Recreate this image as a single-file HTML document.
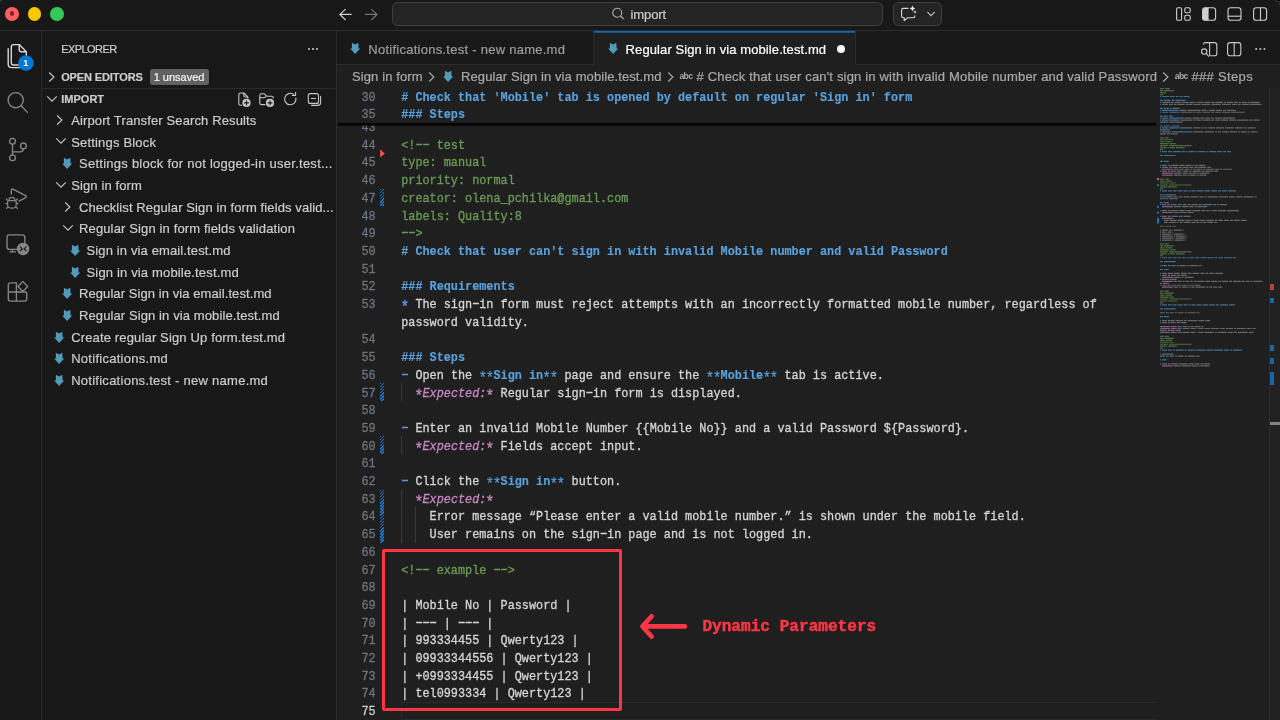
<!DOCTYPE html>
<html>
<head>
<meta charset="utf-8">
<style>
*{box-sizing:border-box;margin:0;padding:0}
html,body{width:1280px;height:720px;overflow:hidden;background:#181818}
body{font-family:"Liberation Sans",sans-serif;color:#cccccc;position:relative}
.abs{position:absolute}
#titlebar{left:0;top:0;width:1280px;height:30px;background:#181818}
#titleborder{left:0;top:30px;width:1280px;height:1px;background:#2b2b2b}
.tl{position:absolute;top:7px;width:13px;height:13px;border-radius:50%}
#search{left:392px;top:2px;width:491px;height:24px;border:1px solid #404040;border-radius:5.5px;background:#242424}
#copilot{left:893px;top:2px;width:49px;height:24px;border:1px solid #404040;border-radius:5.5px;background:#242424}
#activity{left:0;top:31px;width:41px;height:689px;background:#181818}
#actborder{left:41px;top:31px;width:1px;height:689px;background:#2b2b2b}
#sidebar{left:42px;top:31px;width:294px;height:689px;background:#181818}
#sideborder{left:336px;top:31px;width:1px;height:689px;background:#2b2b2b}
#editor{left:337px;top:31px;width:943px;height:689px;background:#1f1f1f}
#tabs{left:337px;top:31px;width:943px;height:33px;background:#181818}
#tabsborder{left:337px;top:64px;width:943px;height:1px;background:#2b2b2b}
.t{position:absolute;white-space:pre;line-height:1}
.code,.ln{transform:scaleY(1.15);transform-origin:0 50%}
#root{position:absolute;left:0;top:0;width:1280px;height:720px;will-change:transform}
.sb{font-size:12.8px;color:#cccccc}
.code{font-family:"Liberation Mono",monospace;font-size:11.83px;color:#d4d4d4;-webkit-text-stroke:0.3px}
.ln{font-family:"Liberation Mono",monospace;font-size:11.83px;color:#6e7681;text-align:right;width:30px;-webkit-text-stroke:0.25px}
.h{color:#5aa2de;font-weight:bold;-webkit-text-stroke:0.12px}
.c{color:#6a9955}
.b{color:#5aa2de;font-weight:bold;-webkit-text-stroke:0.12px}
.i{color:#c586c0;font-style:italic}
.p{color:#6796e6}
.a{display:inline-block;width:7.1px;font-size:14.5px;line-height:1;position:relative;top:2.6px;left:-0.8px;font-style:normal;font-weight:normal}
.lnact{color:#cccccc}
.hatch{background:repeating-linear-gradient(135deg,#187ad0 0 1.15px,#1f1f1f 1.15px 2.2px)}
</style>
</head>
<body>
<div id="root">
<div id="titlebar" class="abs"></div>
<div id="titleborder" class="abs"></div>
<div id="search" class="abs"></div>
<div id="copilot" class="abs"></div>
<div id="activity" class="abs"></div>
<div id="actborder" class="abs"></div>
<div id="sidebar" class="abs"></div>
<div id="sideborder" class="abs"></div>
<div id="editor" class="abs"></div>
<div id="tabs" class="abs"></div>
<div id="tabsborder" class="abs"></div>
<div class="abs" style="left:5.2px;top:6.9px;width:13.7px;height:13.7px;border-radius:50%;background:radial-gradient(circle,#fd5f62 58%,#f4404d 100%)"></div>
<div class="abs" style="left:9.6px;top:11.3px;width:4.9px;height:4.9px;border-radius:50%;background:#80222b"></div>
<div class="abs" style="left:27.8px;top:6.9px;width:13.7px;height:13.7px;border-radius:50%;background:radial-gradient(circle,#fbc800 58%,#eab500 100%)"></div>
<div class="abs" style="left:50.3px;top:6.9px;width:13.7px;height:13.7px;border-radius:50%;background:radial-gradient(circle,#34c75a 58%,#1fb848 100%)"></div>
<svg class="abs" style="left:338px;top:7px" width="42" height="16" viewBox="0 0 42 16"><path d="M13.6 7.4 H1.9 M7.6 2.1 L1.9 7.4 L7.6 13" fill="none" stroke="#cfcfcf" stroke-width="1.15" stroke-linejoin="miter"/><path d="M27 7.4 H39 M33.3 2.1 L39 7.4 L33.3 13" fill="none" stroke="#777" stroke-width="1.15"/></svg>
<svg class="abs" style="left:610px;top:6px" width="16" height="16" viewBox="0 0 16 16"><circle cx="7.2" cy="6.8" r="4.5" fill="none" stroke="#b0b0b0" stroke-width="1.1"/><path d="M10.4 10 L13.7 13" stroke="#b0b0b0" stroke-width="1.1"/></svg>
<div class="t" style="left:630.6px;top:4.6px;height:20px;line-height:20px;font-size:13px;color:#cccccc;letter-spacing:-0.12px;-webkit-text-stroke:0.2px">import</div>
<svg class="abs" style="left:898px;top:4px" width="40" height="20" viewBox="0 0 40 20"><path d="M10.5 4.3 H5.3 Q3.6 4.3 3.6 6 V12 Q3.6 13.7 5.3 13.7 H6.2 V16.6 L9.6 13.7 H15 Q16.8 13.7 16.8 12 V11.4" fill="none" stroke="#d4d4d4" stroke-width="1.15" stroke-linejoin="round"/><path d="M14.5 1.6 Q14.9 4 17.3 4.4 Q14.9 4.8 14.5 7.2 Q14.1 4.8 11.7 4.4 Q14.1 4 14.5 1.6 Z M17 6.2 Q17.2 7.8 18.8 8 Q17.2 8.2 17 9.8 Q16.8 8.2 15.2 8 Q16.8 7.8 17 6.2Z" fill="#e8e8e8"/><path d="M29.4 7.8 L33 11.6 L36.8 7.8" fill="none" stroke="#c0c0c0" stroke-width="1.15"/></svg>
<svg class="abs" style="left:1174px;top:5px" width="100" height="18" viewBox="0 0 100 18"><g fill="none" stroke="#cfcfcf" stroke-width="1.1"><rect x="2.6" y="2.7" width="5" height="12.6" rx="1.4"/><rect x="10.8" y="2.7" width="5.4" height="5" rx="1.4"/><rect x="10.8" y="10.3" width="5.4" height="5" rx="1.4"/><rect x="28.6" y="2.7" width="13" height="12.6" rx="2.6"/><rect x="54" y="2.7" width="13" height="12.6" rx="2.6"/><path d="M54 11.2 H67"/><rect x="79.6" y="2.7" width="13" height="12.6" rx="2.6"/><path d="M86.5 2.7 V15.3"/></g><path d="M31.2 2.7 H34.6 V15.3 H31.2 Q28.6 15.3 28.6 12.7 V5.3 Q28.6 2.7 31.2 2.7Z" fill="#cfcfcf"/></svg>
<svg class="abs" style="left:1270px;top:0" width="10" height="8" viewBox="0 0 10 8"><path d="M6.6 0 Q9.2 0.9 10 3.6 V0 Z" fill="#050505"/><path d="M4.6 -0.4 Q8.4 1 10.2 5.6" fill="none" stroke="#3c3c3c" stroke-width="1"/><path d="M8.8 1.5 H10" stroke="#444" stroke-width="0.9"/></svg>
<svg class="abs" style="left:0;top:0" width="6" height="6" viewBox="0 0 6 6"><path d="M-0.2 1.8 Q0.6 0.5 2.6 -0.2" fill="none" stroke="#3c3c3c" stroke-width="1.2"/></svg>

<svg class="abs" style="left:0;top:31px" width="41" height="290" viewBox="0 31 41 290"><g fill="none" stroke-linejoin="round" stroke-linecap="round">
<g stroke="#d7d7d7" stroke-width="1.4"><path d="M19.2 44.6 H13.6 Q11.3 44.6 11.3 46.9 V62.7 Q11.3 65 13.6 65 H24 Q26.3 65 26.3 62.7 V51.7 Z"/><path d="M19.2 44.6 V49.4 Q19.2 51.7 21.5 51.7 H26.3"/><path d="M8.2 48.6 V64 Q8.2 67.6 11.8 67.6 H20.5"/></g>
<g stroke="#868686" stroke-width="1.35">
<circle cx="15.7" cy="100.2" r="7.6"/><path d="M21.2 105.8 L27.4 112.4"/>
<circle cx="12.5" cy="141.3" r="2.9"/><circle cx="23.4" cy="145.9" r="2.9"/><circle cx="12.5" cy="157.7" r="2.9"/><path d="M12.5 144.2 V154.8 M23.4 148.8 Q23.4 151.9 20 151.9 H12.5"/>
<path d="M11.3 194 V190.6 Q11.3 188.3 13.4 189.3 L25.6 195.6 Q27 196.6 25.6 197.6 L19 201.2"/>
<path d="M9 199.6 Q9 197.4 11.9 197.4 Q14.8 197.4 14.8 199.6 M8.6 200.6 H15.2 Q16.2 200.6 16.2 203 V204.4 Q16.2 208.2 11.9 208.2 Q7.6 208.2 7.6 204.4 V203 Q7.6 200.6 8.6 200.6 Z M7.6 203.6 H5.8 M16.2 203.6 H18 M8.2 206.6 L6.4 208.4 M15.6 206.6 L17.4 208.4 M8 200.6 L6.4 199 M15.8 200.6 L17.4 199" stroke-width="1.2"/>
<path d="M17 249.4 H9.4 Q7 249.4 7 247 V237.2 Q7 234.8 9.4 234.8 H22.4 Q24.8 234.8 24.8 237.2 V243"/><path d="M12.4 249.4 V251.9 M9.8 251.9 H15.4"/>
<path d="M16.4 282.8 H10.4 Q8.3 282.8 8.3 284.9 V299 Q8.3 301.1 10.4 301.1 H24.6 Q26.7 301.1 26.7 299 V293 M16.4 282.8 V301.1 M8.3 292 H25.6 Q26.7 292 26.7 293"/><path d="M22.8 281.6 L27.7 286.5 L22.8 291.4 L17.9 286.5 Z"/>
</g></g>
<circle cx="23.1" cy="249" r="6.2" fill="#868686"/>
<path d="M20 246.6 L22.2 248.9 L20 251.2 M26.4 246.6 L24.2 248.9 L26.4 251.2" fill="none" stroke="#181818" stroke-width="1.2"/>
<circle cx="25.9" cy="63" r="7.8" fill="#0078d4"/>
</svg>
<div class="t" style="left:23.2px;top:58.2px;height:10px;line-height:10px;font-size:9.2px;font-weight:bold;color:#ffffff">1</div>

<div class="t" style="left:61.3px;top:39.00px;height:20px;line-height:20px;font-size:11.00px;font-weight:normal;color:#cccccc;-webkit-text-stroke:0.2px;letter-spacing:-0.578px;">EXPLORER</div>
<div class="abs" style="left:308px;top:47.5px;width:2px;height:2px;border-radius:1px;background:#ccc;box-shadow:4px 0 0 #ccc,8px 0 0 #ccc"></div>
<svg class="abs" style="left:48.0px;top:71.20px" width="8" height="12" viewBox="0 0 8 12"><path d="M1.2 1.5 L5.9 6 L1.2 10.5" fill="none" stroke="#c5c5c5" stroke-width="1.15"/></svg>
<div class="t" style="left:61.2px;top:67.00px;height:20px;line-height:20px;font-size:11.00px;font-weight:bold;color:#cccccc;-webkit-text-stroke:0.2px;letter-spacing:-0.120px;">OPEN EDITORS</div>
<div class="abs" style="left:150.2px;top:68.7px;width:58.5px;height:16.4px;border-radius:2.5px;background:#616161"></div>
<div class="t" style="left:153.7px;top:67.00px;height:20px;line-height:20px;font-size:11.00px;font-weight:normal;color:#f5f5f5;-webkit-text-stroke:0.2px;letter-spacing:-0.007px;">1 unsaved</div>
<div class="abs" style="left:42px;top:88px;width:294px;height:1px;background:#2b2b2b"></div>
<svg class="abs" style="left:46.0px;top:95.20px" width="12" height="8" viewBox="0 0 12 8"><path d="M1.2 1.4 L6 6.2 L10.8 1.4" fill="none" stroke="#c5c5c5" stroke-width="1.15"/></svg>
<div class="t" style="left:61.2px;top:88.80px;height:20px;line-height:20px;font-size:11.00px;font-weight:bold;color:#cccccc;-webkit-text-stroke:0.2px;letter-spacing:0.020px;">IMPORT</div>
<svg class="abs" style="left:232px;top:86px" width="100" height="26" viewBox="232 86 100 26"><g fill="none" stroke="#c5c5c5" stroke-width="1.1" stroke-linejoin="round" stroke-linecap="round">
<path d="M241.6 105.2 H240.6 Q238.8 105.2 238.8 103.4 V94.8 Q238.8 93 240.6 93 H243.8 L247.8 97 V98"/><path d="M243.8 93 V95.6 Q243.8 97 245.2 97 H247.8"/>
<path d="M265 104.6 H261.4 Q259.8 104.6 259.8 103 V95.4 Q259.8 93.8 261.4 93.8 H263.6 Q264.6 93.8 265.2 94.6 L266 95.6 Q266.4 96.2 267.4 96.2 H271.6 Q273.4 96.2 273.4 98"/><path d="M259.8 97.8 H263.4 Q264.6 97.8 265.4 96.9"/>
<path d="M295.9 98 A5.7 5.7 0 1 1 293.6 94.4"/><path d="M295.6 92.2 V95.4 H292.4"/>
<rect x="308.3" y="93.6" width="10.2" height="9.8" rx="2"/><path d="M311.3 98.5 H315.5"/><path d="M320.6 96.4 V102.6 Q320.6 105.4 317.8 105.4 H311.6"/>
</g><circle cx="246.5" cy="102.9" r="4.1" fill="#c5c5c5"/><circle cx="270" cy="102.9" r="4.1" fill="#c5c5c5"/><path d="M244.1 102.9 H248.9 M246.5 100.5 V105.3 M267.6 102.9 H272.4 M270 100.5 V105.3" stroke="#181818" stroke-width="1.1" fill="none"/></svg>
<svg class="abs" style="left:56.4px;top:113.90px" width="8" height="12" viewBox="0 0 8 12"><path d="M1.2 1.5 L5.9 6 L1.2 10.5" fill="none" stroke="#c5c5c5" stroke-width="1.15"/></svg>
<div class="t" style="left:71.2px;top:110.90px;height:20px;line-height:20px;font-size:13.00px;font-weight:normal;color:#cccccc;-webkit-text-stroke:0.2px;letter-spacing:0.124px;">Airport Transfer Search Results</div>
<svg class="abs" style="left:54.7px;top:137.47px" width="12" height="8" viewBox="0 0 12 8"><path d="M1.2 1.4 L6 6.2 L10.8 1.4" fill="none" stroke="#c5c5c5" stroke-width="1.15"/></svg>
<div class="t" style="left:71.2px;top:132.57px;height:20px;line-height:20px;font-size:13.00px;font-weight:normal;color:#cccccc;-webkit-text-stroke:0.2px;letter-spacing:0.180px;">Settings Block</div>
<svg class="abs" style="left:61.5px;top:157.34px" width="11" height="13" viewBox="0 0 11 13"><path d="M1.9 0.8 L5.1 2.6 L8.3 0.8 L8.6 6.4 L10.3 6.5 L5.1 11.9 L0.1 6.5 L1.9 6.4 Z" fill="#519aba"/></svg>
<div class="t" style="left:79.0px;top:154.24px;height:20px;line-height:20px;font-size:13.00px;font-weight:normal;color:#cccccc;-webkit-text-stroke:0.2px;letter-spacing:0.256px;">Settings block for not logged-in user.test...</div>
<svg class="abs" style="left:54.7px;top:180.81px" width="12" height="8" viewBox="0 0 12 8"><path d="M1.2 1.4 L6 6.2 L10.8 1.4" fill="none" stroke="#c5c5c5" stroke-width="1.15"/></svg>
<div class="t" style="left:71.2px;top:175.91px;height:20px;line-height:20px;font-size:13.00px;font-weight:normal;color:#cccccc;-webkit-text-stroke:0.2px;letter-spacing:0.119px;">Sign in form</div>
<svg class="abs" style="left:64.0px;top:200.58px" width="8" height="12" viewBox="0 0 8 12"><path d="M1.2 1.5 L5.9 6 L1.2 10.5" fill="none" stroke="#c5c5c5" stroke-width="1.15"/></svg>
<div class="t" style="left:79.0px;top:197.58px;height:20px;line-height:20px;font-size:13.00px;font-weight:normal;color:#cccccc;-webkit-text-stroke:0.2px;letter-spacing:0.102px;">Checklist Regular Sign in form fields valid...</div>
<svg class="abs" style="left:62.4px;top:224.15px" width="12" height="8" viewBox="0 0 12 8"><path d="M1.2 1.4 L6 6.2 L10.8 1.4" fill="none" stroke="#c5c5c5" stroke-width="1.15"/></svg>
<div class="t" style="left:79.0px;top:219.25px;height:20px;line-height:20px;font-size:13.00px;font-weight:normal;color:#cccccc;-webkit-text-stroke:0.2px;letter-spacing:0.134px;">Regular Sign in form fields validation</div>
<svg class="abs" style="left:69.5px;top:244.02px" width="11" height="13" viewBox="0 0 11 13"><path d="M1.9 0.8 L5.1 2.6 L8.3 0.8 L8.6 6.4 L10.3 6.5 L5.1 11.9 L0.1 6.5 L1.9 6.4 Z" fill="#519aba"/></svg>
<div class="t" style="left:86.5px;top:240.92px;height:20px;line-height:20px;font-size:13.00px;font-weight:normal;color:#cccccc;-webkit-text-stroke:0.2px;letter-spacing:0.128px;">Sign in via email.test.md</div>
<svg class="abs" style="left:69.5px;top:265.69px" width="11" height="13" viewBox="0 0 11 13"><path d="M1.9 0.8 L5.1 2.6 L8.3 0.8 L8.6 6.4 L10.3 6.5 L5.1 11.9 L0.1 6.5 L1.9 6.4 Z" fill="#519aba"/></svg>
<div class="t" style="left:86.5px;top:262.59px;height:20px;line-height:20px;font-size:13.00px;font-weight:normal;color:#cccccc;-webkit-text-stroke:0.2px;letter-spacing:0.161px;">Sign in via mobile.test.md</div>
<svg class="abs" style="left:61.5px;top:287.36px" width="11" height="13" viewBox="0 0 11 13"><path d="M1.9 0.8 L5.1 2.6 L8.3 0.8 L8.6 6.4 L10.3 6.5 L5.1 11.9 L0.1 6.5 L1.9 6.4 Z" fill="#519aba"/></svg>
<div class="t" style="left:79.0px;top:284.26px;height:20px;line-height:20px;font-size:13.00px;font-weight:normal;color:#cccccc;-webkit-text-stroke:0.2px;letter-spacing:0.078px;">Regular Sign in via email.test.md</div>
<svg class="abs" style="left:61.5px;top:309.03px" width="11" height="13" viewBox="0 0 11 13"><path d="M1.9 0.8 L5.1 2.6 L8.3 0.8 L8.6 6.4 L10.3 6.5 L5.1 11.9 L0.1 6.5 L1.9 6.4 Z" fill="#519aba"/></svg>
<div class="t" style="left:79.0px;top:305.93px;height:20px;line-height:20px;font-size:13.00px;font-weight:normal;color:#cccccc;-webkit-text-stroke:0.2px;letter-spacing:0.104px;">Regular Sign in via mobile.test.md</div>
<svg class="abs" style="left:53.7px;top:330.70px" width="11" height="13" viewBox="0 0 11 13"><path d="M1.9 0.8 L5.1 2.6 L8.3 0.8 L8.6 6.4 L10.3 6.5 L5.1 11.9 L0.1 6.5 L1.9 6.4 Z" fill="#519aba"/></svg>
<div class="t" style="left:71.2px;top:327.60px;height:20px;line-height:20px;font-size:13.00px;font-weight:normal;color:#cccccc;-webkit-text-stroke:0.2px;letter-spacing:0.148px;">Create regular Sign Up form.test.md</div>
<svg class="abs" style="left:53.7px;top:352.37px" width="11" height="13" viewBox="0 0 11 13"><path d="M1.9 0.8 L5.1 2.6 L8.3 0.8 L8.6 6.4 L10.3 6.5 L5.1 11.9 L0.1 6.5 L1.9 6.4 Z" fill="#519aba"/></svg>
<div class="t" style="left:71.2px;top:349.27px;height:20px;line-height:20px;font-size:13.00px;font-weight:normal;color:#cccccc;-webkit-text-stroke:0.2px;letter-spacing:0.270px;">Notifications.md</div>
<svg class="abs" style="left:53.7px;top:374.04px" width="11" height="13" viewBox="0 0 11 13"><path d="M1.9 0.8 L5.1 2.6 L8.3 0.8 L8.6 6.4 L10.3 6.5 L5.1 11.9 L0.1 6.5 L1.9 6.4 Z" fill="#519aba"/></svg>
<div class="t" style="left:71.2px;top:370.94px;height:20px;line-height:20px;font-size:13.00px;font-weight:normal;color:#cccccc;-webkit-text-stroke:0.2px;letter-spacing:0.260px;">Notifications.test - new name.md</div>
<div class="abs" style="left:593px;top:31px;width:1px;height:33px;background:#2b2b2b"></div>
<svg class="abs" style="left:350.4px;top:42.00px" width="11" height="13" viewBox="0 0 11 13"><path d="M1.9 0.8 L5.1 2.6 L8.3 0.8 L8.6 6.4 L10.3 6.5 L5.1 11.9 L0.1 6.5 L1.9 6.4 Z" fill="#519aba"/></svg>
<div class="t" style="left:368.3px;top:39.50px;height:20px;line-height:20px;font-size:13.00px;font-weight:normal;color:#9d9d9d;-webkit-text-stroke:0.2px;letter-spacing:0.260px;">Notifications.test - new name.md</div>
<div class="abs" style="left:594px;top:31px;width:261px;height:34px;background:#1f1f1f"></div>
<div class="abs" style="left:594px;top:31px;width:261px;height:1px;background:#126bb5"></div>
<div class="abs" style="left:594px;top:32px;width:261px;height:1px;background:#15548a"></div>
<div class="abs" style="left:855px;top:31px;width:1px;height:33px;background:#2b2b2b"></div>
<svg class="abs" style="left:608.2px;top:42.00px" width="11" height="13" viewBox="0 0 11 13"><path d="M1.9 0.8 L5.1 2.6 L8.3 0.8 L8.6 6.4 L10.3 6.5 L5.1 11.9 L0.1 6.5 L1.9 6.4 Z" fill="#519aba"/></svg>
<div class="t" style="left:625.6px;top:39.50px;height:20px;line-height:20px;font-size:13.00px;font-weight:normal;color:#ffffff;-webkit-text-stroke:0.2px;letter-spacing:0.098px;">Regular Sign in via mobile.test.md</div>
<div class="abs" style="left:837px;top:45px;width:8px;height:8px;border-radius:50%;background:#ffffff"></div>
<svg class="abs" style="left:1198px;top:40px" width="72" height="20" viewBox="0 0 72 20"><g fill="none" stroke="#c8c8c8" stroke-width="1.1"><path d="M5.4 4.6 Q5.4 2.6 7.4 2.6 H16.4 Q18.8 2.6 18.8 5 V13.4 Q18.8 15.8 16.4 15.8 H12"/><path d="M11.6 2.6 V15.8"/><circle cx="6.2" cy="11.6" r="2.7"/><path d="M8.2 13.6 L11 16.6"/><rect x="29.6" y="2.6" width="13.2" height="13.2" rx="2.6"/><path d="M36.2 2.6 V15.8"/></g><g fill="#c8c8c8"><circle cx="58.2" cy="8.9" r="1"/><circle cx="62.3" cy="8.9" r="1"/><circle cx="66.4" cy="8.9" r="1"/></g></svg>
<div class="t" style="left:351.9px;top:67.20px;height:20px;line-height:20px;font-size:13.00px;font-weight:normal;color:#a9a9a9;-webkit-text-stroke:0.2px;letter-spacing:0.123px;">Sign in form</div>
<svg class="abs" style="left:428.3px;top:71.40px" width="8" height="12" viewBox="0 0 8 12"><path d="M1.2 1.5 L5.9 6 L1.2 10.5" fill="none" stroke="#a9a9a9" stroke-width="1.15"/></svg>
<svg class="abs" style="left:443.4px;top:70.30px" width="11" height="13" viewBox="0 0 11 13"><path d="M1.9 0.8 L5.1 2.6 L8.3 0.8 L8.6 6.4 L10.3 6.5 L5.1 11.9 L0.1 6.5 L1.9 6.4 Z" fill="#519aba"/></svg>
<div class="t" style="left:461.0px;top:67.20px;height:20px;line-height:20px;font-size:13.00px;font-weight:normal;color:#a9a9a9;-webkit-text-stroke:0.2px;letter-spacing:0.095px;">Regular Sign in via mobile.test.md</div>
<svg class="abs" style="left:666.8px;top:71.40px" width="8" height="12" viewBox="0 0 8 12"><path d="M1.2 1.5 L5.9 6 L1.2 10.5" fill="none" stroke="#a9a9a9" stroke-width="1.15"/></svg>
<div class="t" style="left:679.4px;top:70.40px;height:12px;line-height:12px;font-size:8.6px;font-weight:bold;color:#a9a9a9;letter-spacing:-0.55px">abc</div>
<div class="t" style="left:696.5px;top:67.20px;height:20px;line-height:20px;font-size:13.00px;font-weight:normal;color:#a9a9a9;-webkit-text-stroke:0.2px;letter-spacing:0.178px;"># Check that user can't sign in with invalid Mobile number and valid Password</div>
<svg class="abs" style="left:1161.8px;top:71.40px" width="8" height="12" viewBox="0 0 8 12"><path d="M1.2 1.5 L5.9 6 L1.2 10.5" fill="none" stroke="#a9a9a9" stroke-width="1.15"/></svg>
<div class="t" style="left:1174.7px;top:70.40px;height:12px;line-height:12px;font-size:8.6px;font-weight:bold;color:#a9a9a9;letter-spacing:-0.55px">abc</div>
<div class="t" style="left:1191.5px;top:67.20px;height:20px;line-height:20px;font-size:13.00px;font-weight:normal;color:#a9a9a9;-webkit-text-stroke:0.2px;letter-spacing:0.328px;">### Steps</div>
<div class="t ln" style="left:345.6px;top:120.05px;height:17.70px;line-height:17.70px">43</div>
<div class="t ln" style="left:345.6px;top:137.75px;height:17.70px;line-height:17.70px">44</div><div class="t code" style="left:401.2px;top:137.75px;height:17.70px;line-height:17.70px"><span class="c">&lt;!−− test</span></div>
<div class="t ln" style="left:345.6px;top:155.45px;height:17.70px;line-height:17.70px">45</div><div class="t code" style="left:401.2px;top:155.45px;height:17.70px;line-height:17.70px"><span class="c">type: manual</span></div>
<div class="t ln" style="left:345.6px;top:173.15px;height:17.70px;line-height:17.70px">46</div><div class="t code" style="left:401.2px;top:173.15px;height:17.70px;line-height:17.70px"><span class="c">priority: normal</span></div>
<div class="t ln" style="left:345.6px;top:190.85px;height:17.70px;line-height:17.70px">47</div><div class="t code" style="left:401.2px;top:190.85px;height:17.70px;line-height:17.70px"><span class="c">creator: olena_pchilka@gmail.com</span></div>
<div class="t ln" style="left:345.6px;top:208.55px;height:17.70px;line-height:17.70px">48</div><div class="t code" style="left:401.2px;top:208.55px;height:17.70px;line-height:17.70px"><span class="c">labels: Quality:8</span></div>
<div class="t ln" style="left:345.6px;top:226.25px;height:17.70px;line-height:17.70px">49</div><div class="t code" style="left:401.2px;top:226.25px;height:17.70px;line-height:17.70px"><span class="c">−−&gt;</span></div>
<div class="t ln" style="left:345.6px;top:243.95px;height:17.70px;line-height:17.70px">50</div><div class="t code" style="left:401.2px;top:243.95px;height:17.70px;line-height:17.70px"><span class="h"># Check that user can't sign in with invalid Mobile number and valid Password</span></div>
<div class="t ln" style="left:345.6px;top:261.65px;height:17.70px;line-height:17.70px">51</div>
<div class="t ln" style="left:345.6px;top:279.35px;height:17.70px;line-height:17.70px">52</div><div class="t code" style="left:401.2px;top:279.35px;height:17.70px;line-height:17.70px"><span class="h">### Requirements</span></div>
<div class="t ln" style="left:345.6px;top:297.05px;height:17.70px;line-height:17.70px">53</div><div class="t code" style="left:401.2px;top:297.05px;height:17.70px;line-height:17.70px"><span class="p"><span class="a">*</span></span> The sign−in form must reject attempts with an incorrectly formatted mobile number, regardless of</div>
<div class="t code" style="left:401.2px;top:314.75px;height:17.70px;line-height:17.70px">password validity.</div>
<div class="t ln" style="left:345.6px;top:332.45px;height:17.70px;line-height:17.70px">54</div>
<div class="t ln" style="left:345.6px;top:350.15px;height:17.70px;line-height:17.70px">55</div><div class="t code" style="left:401.2px;top:350.15px;height:17.70px;line-height:17.70px"><span class="h">### Steps</span></div>
<div class="t ln" style="left:345.6px;top:367.85px;height:17.70px;line-height:17.70px">56</div><div class="t code" style="left:401.2px;top:367.85px;height:17.70px;line-height:17.70px"><span class="p">−</span> Open the <span class="b"><span class="a">*</span><span class="a">*</span>Sign in<span class="a">*</span><span class="a">*</span></span> page and ensure the <span class="b"><span class="a">*</span><span class="a">*</span>Mobile<span class="a">*</span><span class="a">*</span></span> tab is active.</div>
<div class="t ln" style="left:345.6px;top:385.55px;height:17.70px;line-height:17.70px">57</div><div class="t code" style="left:401.2px;top:385.55px;height:17.70px;line-height:17.70px">  <span class="i"><span class="a">*</span>Expected:<span class="a">*</span></span> Regular sign−in form is displayed.</div>
<div class="t ln" style="left:345.6px;top:403.25px;height:17.70px;line-height:17.70px">58</div>
<div class="t ln" style="left:345.6px;top:420.95px;height:17.70px;line-height:17.70px">59</div><div class="t code" style="left:401.2px;top:420.95px;height:17.70px;line-height:17.70px"><span class="p">−</span> Enter an invalid Mobile Number {{Mobile No}} and a valid Password ${Password}.</div>
<div class="t ln" style="left:345.6px;top:438.65px;height:17.70px;line-height:17.70px">60</div><div class="t code" style="left:401.2px;top:438.65px;height:17.70px;line-height:17.70px">  <span class="i"><span class="a">*</span>Expected:<span class="a">*</span></span> Fields accept input.</div>
<div class="t ln" style="left:345.6px;top:456.35px;height:17.70px;line-height:17.70px">61</div>
<div class="t ln" style="left:345.6px;top:474.05px;height:17.70px;line-height:17.70px">62</div><div class="t code" style="left:401.2px;top:474.05px;height:17.70px;line-height:17.70px"><span class="p">−</span> Click the <span class="b"><span class="a">*</span><span class="a">*</span>Sign in<span class="a">*</span><span class="a">*</span></span> button.</div>
<div class="t ln" style="left:345.6px;top:491.75px;height:17.70px;line-height:17.70px">63</div><div class="t code" style="left:401.2px;top:491.75px;height:17.70px;line-height:17.70px">  <span class="i"><span class="a">*</span>Expected:<span class="a">*</span></span></div>
<div class="t ln" style="left:345.6px;top:509.45px;height:17.70px;line-height:17.70px">64</div><div class="t code" style="left:401.2px;top:509.45px;height:17.70px;line-height:17.70px">    Error message “Please enter a valid mobile number.” is shown under the mobile field.</div>
<div class="t ln" style="left:345.6px;top:527.15px;height:17.70px;line-height:17.70px">65</div><div class="t code" style="left:401.2px;top:527.15px;height:17.70px;line-height:17.70px">    User remains on the sign−in page and is not logged in.</div>
<div class="t ln" style="left:345.6px;top:544.85px;height:17.70px;line-height:17.70px">66</div>
<div class="t ln" style="left:345.6px;top:562.55px;height:17.70px;line-height:17.70px">67</div><div class="t code" style="left:401.2px;top:562.55px;height:17.70px;line-height:17.70px"><span class="c">&lt;!−− example −−&gt;</span></div>
<div class="t ln" style="left:345.6px;top:580.25px;height:17.70px;line-height:17.70px">68</div>
<div class="t ln" style="left:345.6px;top:597.95px;height:17.70px;line-height:17.70px">69</div><div class="t code" style="left:401.2px;top:597.95px;height:17.70px;line-height:17.70px">| Mobile No | Password |</div>
<div class="t ln" style="left:345.6px;top:615.65px;height:17.70px;line-height:17.70px">70</div><div class="t code" style="left:401.2px;top:615.65px;height:17.70px;line-height:17.70px">| −−− | −−− |</div>
<div class="t ln" style="left:345.6px;top:633.35px;height:17.70px;line-height:17.70px">71</div><div class="t code" style="left:401.2px;top:633.35px;height:17.70px;line-height:17.70px">| 993334455 | Qwerty123 |</div>
<div class="t ln" style="left:345.6px;top:651.05px;height:17.70px;line-height:17.70px">72</div><div class="t code" style="left:401.2px;top:651.05px;height:17.70px;line-height:17.70px">| 09933344556 | Qwerty123 |</div>
<div class="t ln" style="left:345.6px;top:668.75px;height:17.70px;line-height:17.70px">73</div><div class="t code" style="left:401.2px;top:668.75px;height:17.70px;line-height:17.70px">| +0993334455 | Qwerty123 |</div>
<div class="t ln" style="left:345.6px;top:686.45px;height:17.70px;line-height:17.70px">74</div><div class="t code" style="left:401.2px;top:686.45px;height:17.70px;line-height:17.70px">| tel0993334 | Qwerty123 |</div>
<div class="t ln lnact" style="left:345.6px;top:704.15px;height:17.70px;line-height:17.70px">75</div>
<div class="abs" style="left:401.0px;top:383.35px;width:1px;height:17.70px;background:#3a3a3a"></div>
<div class="abs" style="left:401.0px;top:436.45px;width:1px;height:17.70px;background:#3a3a3a"></div>
<div class="abs" style="left:401.0px;top:489.55px;width:1px;height:53.10px;background:#3a3a3a"></div>
<div class="abs" style="left:415.3px;top:507.25px;width:1px;height:35.40px;background:#3a3a3a"></div>
<div class="abs hatch" style="left:380.2px;top:188.65px;width:3.8px;height:17.70px"></div>
<div class="abs hatch" style="left:380.2px;top:383.35px;width:3.8px;height:17.70px"></div>
<div class="abs hatch" style="left:380.2px;top:436.45px;width:3.8px;height:17.70px"></div>
<div class="abs hatch" style="left:380.2px;top:489.55px;width:3.8px;height:53.10px"></div>
<svg class="abs" style="left:378px;top:147px" width="10" height="13" viewBox="378 147 10 13"><path d="M380.1 149.6 L384.9 153.6 L380.1 157.6 Z" fill="#f4524a"/></svg>
<div class="abs" style="left:401px;top:701.95px;width:756px;height:17.70px;border:1px solid #292929;border-right:none"></div>
<div class="abs" style="left:337px;top:88px;width:819px;height:35px;background:#1f1f1f"></div><div class="abs" style="left:338px;top:123px;width:818px;height:1.5px;background:#050505;box-shadow:0 0.6px 1.3px 0.2px rgba(0,0,0,0.9)"></div><div class="t ln" style="left:345.6px;top:89.50px;height:17.70px;line-height:17.70px">30</div><div class="t code" style="left:401.2px;top:89.50px;height:17.70px;line-height:17.70px"><span class="h"># Check that 'Mobile' tab is opened by default on regular 'Sign in' form</span></div><div class="t ln" style="left:345.6px;top:107.35px;height:17.70px;line-height:17.70px">35</div><div class="t code" style="left:401.2px;top:107.35px;height:17.70px;line-height:17.70px"><span class="h">### Steps</span></div>
<svg class="abs" style="left:1150px;top:86px;filter:blur(0.3px)" width="130" height="320" viewBox="1150 86 130 320">
<path d="M1162.0 102.41h7.9M1170.8 102.41h3.0M1174.8 102.41h5.9M1181.7 102.41h6.9M1189.5 102.41h4.9M1195.5 102.41h1.0M1197.4 102.41h5.9M1204.3 102.41h5.9M1211.2 102.41h3.0M1215.2 102.41h7.9M1224.0 102.41h2.0M1227.0 102.41h5.9M1233.9 102.41h3.9M1238.8 102.41h2.0M1241.8 102.41h4.9M1247.7 102.41h2.0M1250.6 102.41h8.9M1162.0 104.38h5.9M1168.9 104.38h3.9M1173.8 104.38h3.0M1177.7 104.38h6.9M1185.6 104.38h6.9M1193.5 104.38h6.9M1201.4 104.38h8.9M1211.2 104.38h9.8M1222.1 104.38h8.9M1231.9 104.38h4.9M1237.8 104.38h3.0M1241.8 104.38h6.9M1249.6 104.38h11.8M1179.7 110.28h6.9M1187.6 110.28h12.8M1201.4 110.28h4.9M1207.3 110.28h1.0M1209.2 110.28h5.9M1216.1 110.28h5.9M1223.0 110.28h3.0M1227.0 110.28h8.9M1180.7 112.24h11.8M1193.5 112.24h2.0M1196.4 112.24h4.9M1202.4 112.24h7.9M1211.2 112.24h3.0M1215.2 112.24h5.9M1222.1 112.24h7.9M1230.9 112.24h13.8M1184.6 118.14h6.9M1192.5 118.14h6.9M1200.4 118.14h3.9M1205.3 118.14h4.9M1211.2 118.14h3.0M1215.2 118.14h6.9M1223.0 118.14h11.8M1180.7 120.11h11.8M1193.5 120.11h2.0M1196.4 120.11h4.9M1202.4 120.11h7.9M1211.2 120.11h3.0M1215.2 120.11h4.9M1221.1 120.11h6.9M1229.0 120.11h6.9M1236.8 120.11h11.8M1249.6 120.11h3.0M1253.6 120.11h5.9M1160.0 122.07h7.9M1168.9 122.07h13.8M1179.7 127.97h12.8M1193.5 127.97h6.9M1201.4 127.97h2.0M1204.3 127.97h3.0M1208.3 127.97h6.9M1216.1 127.97h7.9M1225.0 127.97h8.9M1234.9 127.97h7.9M1243.7 127.97h3.0M1247.7 127.97h7.9M1160.0 129.94h9.8M1193.5 131.90h9.8M1204.3 131.90h9.8M1215.2 131.90h2.0M1218.1 131.90h3.0M1222.1 131.90h6.9M1229.9 131.90h6.9M1237.8 131.90h2.0M1240.8 131.90h5.9M1247.7 131.90h2.0M1250.6 131.90h6.9M1160.0 133.87h5.9M1166.9 133.87h3.0M1170.8 133.87h6.9M1162.0 165.32h4.9M1167.9 165.32h2.0M1170.8 165.32h7.9M1179.7 165.32h4.9M1185.6 165.32h5.9M1192.5 165.32h2.0M1195.5 165.32h3.0M1199.4 165.32h5.9M1162.0 167.29h5.9M1168.9 167.29h3.0M1172.8 167.29h4.9M1178.7 167.29h3.0M1182.7 167.29h5.9M1189.5 167.29h3.9M1194.5 167.29h3.0M1198.4 167.29h7.9M1207.3 167.29h3.9M1173.8 169.26h4.9M1179.7 169.26h3.9M1184.6 169.26h4.9M1190.5 169.26h2.0M1193.5 169.26h2.0M1196.4 169.26h5.9M1203.3 169.26h2.0M1206.3 169.26h7.9M1215.2 169.26h3.9M1220.1 169.26h2.0M1223.0 169.26h8.9M1162.0 171.22h4.9M1167.9 171.22h2.0M1170.8 171.22h4.9M1176.7 171.22h3.9M1181.7 171.22h1.0M1183.6 171.22h4.9M1189.5 171.22h2.0M1192.5 171.22h7.9M1201.4 171.22h3.0M1205.3 171.22h7.9M1214.2 171.22h3.9M1173.8 173.19h7.9M1182.7 173.19h4.9M1188.6 173.19h3.0M1192.5 173.19h3.9M1197.4 173.19h2.0M1200.4 173.19h8.9M1173.8 175.15h7.9M1182.7 175.15h3.0M1186.6 175.15h2.0M1189.5 175.15h5.9M1196.4 175.15h2.0M1199.4 175.15h6.9M1162.0 196.78h3.0M1165.9 196.78h6.9M1173.8 196.78h3.9M1178.7 196.78h3.9M1183.6 196.78h5.9M1190.5 196.78h7.9M1199.4 196.78h3.9M1204.3 196.78h2.0M1207.3 196.78h10.8M1219.1 196.78h8.9M1229.0 196.78h5.9M1235.8 196.78h6.9M1243.7 196.78h9.8M1254.6 196.78h2.0M1160.0 198.75h7.9M1168.9 198.75h8.9M1162.0 204.64h3.9M1166.9 204.64h3.0M1182.7 204.64h3.9M1187.6 204.64h3.0M1191.5 204.64h5.9M1198.4 204.64h3.0M1213.2 204.64h3.0M1217.1 204.64h2.0M1220.1 204.64h6.9M1173.8 206.61h6.9M1181.7 206.61h6.9M1189.5 206.61h3.9M1194.5 206.61h2.0M1197.4 206.61h9.8M1162.0 210.54h4.9M1167.9 210.54h2.0M1170.8 210.54h6.9M1178.7 210.54h5.9M1185.6 210.54h5.9M1192.5 210.54h7.9M1201.4 210.54h3.9M1206.3 210.54h3.0M1210.2 210.54h1.0M1212.2 210.54h4.9M1218.1 210.54h7.9M1227.0 210.54h11.8M1173.8 212.51h5.9M1180.7 212.51h5.9M1187.6 212.51h5.9M1162.0 216.44h4.9M1167.9 216.44h3.0M1183.6 216.44h6.9M1163.9 220.37h4.9M1169.8 220.37h6.9M1177.7 220.37h6.9M1185.6 220.37h4.9M1191.5 220.37h1.0M1193.5 220.37h4.9M1199.4 220.37h5.9M1206.3 220.37h7.9M1215.2 220.37h2.0M1218.1 220.37h4.9M1224.0 220.37h4.9M1229.9 220.37h3.0M1233.9 220.37h5.9M1240.8 220.37h5.9M1163.9 222.34h3.9M1168.9 222.34h6.9M1176.7 222.34h2.0M1179.7 222.34h3.0M1183.6 222.34h6.9M1191.5 222.34h3.9M1196.4 222.34h3.0M1200.4 222.34h2.0M1203.3 222.34h3.0M1207.3 222.34h5.9M1214.2 222.34h3.0M1160.0 230.20h1.0M1162.0 230.20h5.9M1168.9 230.20h2.0M1171.8 230.20h1.0M1173.8 230.20h7.9M1182.7 230.20h1.0M1160.0 232.17h1.0M1162.0 232.17h3.0M1165.9 232.17h1.0M1167.9 232.17h3.0M1171.8 232.17h1.0M1160.0 234.13h1.0M1162.0 234.13h8.9M1171.8 234.13h1.0M1173.8 234.13h8.9M1183.6 234.13h1.0M1160.0 236.10h1.0M1162.0 236.10h10.8M1173.8 236.10h1.0M1175.8 236.10h8.9M1185.6 236.10h1.0M1160.0 238.07h1.0M1162.0 238.07h10.8M1173.8 238.07h1.0M1175.8 238.07h8.9M1185.6 238.07h1.0M1160.0 240.03h1.0M1162.0 240.03h9.8M1172.8 240.03h1.0M1174.8 240.03h8.9M1184.6 240.03h1.0M1162.0 265.59h4.9M1167.9 265.59h3.0M1171.8 265.59h3.9M1176.7 265.59h2.0M1179.7 265.59h5.9M1186.6 265.59h2.0M1189.5 265.59h7.9M1198.4 265.59h3.0M1162.0 273.45h4.9M1167.9 273.45h4.9M1173.8 273.45h5.9M1180.7 273.45h5.9M1187.6 273.45h3.9M1192.5 273.45h6.9M1200.4 273.45h3.9M1205.3 273.45h3.0M1209.2 273.45h4.9M1215.2 273.45h7.9M1162.0 275.42h4.9M1167.9 275.42h2.0M1170.8 275.42h4.9M1176.7 275.42h3.0M1180.7 275.42h5.9M1173.8 277.39h6.9M1181.7 277.39h2.0M1184.6 277.39h8.9M1162.0 279.35h6.9M1169.8 279.35h6.9M1173.8 281.32h3.0M1177.7 281.32h3.9M1182.7 281.32h2.0M1185.6 281.32h3.9M1190.5 281.32h2.0M1193.5 281.32h3.0M1197.4 281.32h6.9M1205.3 281.32h4.9M1211.2 281.32h5.9M1218.1 281.32h3.0M1222.1 281.32h5.9M1229.0 281.32h3.0M1232.9 281.32h7.9M1241.8 281.32h3.0M1245.7 281.32h3.9M1250.6 281.32h2.0M1253.6 281.32h8.9M1160.0 283.28h2.0M1163.0 283.28h5.9M1162.0 285.25h4.9M1167.9 285.25h3.0M1171.8 285.25h3.9M1176.7 285.25h3.9M1181.7 285.25h4.9M1187.6 285.25h2.0M1190.5 285.25h3.0M1194.5 285.25h5.9M1173.8 287.22h3.9M1178.7 287.22h2.0M1181.7 287.22h5.9M1188.6 287.22h2.0M1191.5 287.22h3.0M1195.5 287.22h9.8M1206.3 287.22h2.0M1209.2 287.22h3.0M1213.2 287.22h3.9M1218.1 287.22h3.9M1160.0 312.77h4.9M1165.9 312.77h3.0M1169.8 312.77h3.9M1174.8 312.77h2.0M1177.7 312.77h5.9M1184.6 312.77h2.0M1187.6 312.77h7.9M1196.4 312.77h3.0M1162.0 320.64h4.9M1167.9 320.64h6.9M1175.8 320.64h6.9M1183.6 320.64h3.0M1187.6 320.64h9.8M1198.4 320.64h5.9M1205.3 320.64h4.9M1162.0 322.60h4.9M1167.9 322.60h2.0M1170.8 322.60h4.9M1176.7 322.60h3.0M1180.7 322.60h5.9M1182.7 326.54h3.9M1187.6 326.54h2.0M1190.5 326.54h3.0M1194.5 326.54h5.9M1201.4 326.54h2.0M1182.7 328.50h6.9M1190.5 328.50h4.9M1196.4 328.50h1.0M1198.4 328.50h4.9M1204.3 328.50h5.9M1211.2 328.50h7.9M1220.1 328.50h4.9M1226.0 328.50h6.9M1233.9 328.50h2.0M1236.8 328.50h8.9M1246.7 328.50h4.9M1252.6 328.50h3.0M1160.0 330.47h6.9M1167.9 330.47h6.9M1175.8 330.47h4.9M1182.7 332.43h6.9M1190.5 332.43h4.9M1196.4 332.43h1.0M1198.4 332.43h4.9M1204.3 332.43h9.8M1215.2 332.43h2.0M1218.1 332.43h8.9M1228.0 332.43h4.9M1233.9 332.43h3.0M1237.8 332.43h9.8M1248.7 332.43h4.9M1160.0 356.03h4.9M1165.9 356.03h3.0M1169.8 356.03h3.9M1174.8 356.03h2.0M1177.7 356.03h5.9M1184.6 356.03h2.0M1187.6 356.03h7.9M1196.4 356.03h3.0M1162.0 363.89h4.9M1167.9 363.89h2.0M1170.8 363.89h6.9M1178.7 363.89h8.9M1188.6 363.89h4.9M1194.5 363.89h4.9M1200.4 363.89h3.0M1204.3 363.89h5.9M1173.8 365.86h6.9M1181.7 365.86h8.9M1191.5 365.86h4.9M1197.4 365.86h2.0M1200.4 365.86h8.9" stroke="#c8c8c8" stroke-opacity="0.42" stroke-width="1.2" fill="none"/>
<path d="M1160.0 88.65h3.9M1164.9 88.65h4.9M1160.0 90.62h3.0M1163.9 90.62h9.8M1160.0 92.58h5.9M1160.0 94.55h3.0M1160.0 137.80h3.9M1164.9 137.80h3.9M1160.0 139.77h3.0M1163.9 139.77h9.8M1160.0 141.73h4.9M1165.9 141.73h5.9M1160.0 143.70h8.9M1169.8 143.70h5.9M1160.0 145.66h7.9M1168.9 145.66h22.7M1160.0 147.63h6.9M1167.9 147.63h1.0M1169.8 147.63h4.9M1175.8 147.63h8.9M1160.0 149.60h3.0M1160.0 179.09h3.9M1164.9 179.09h3.9M1160.0 181.05h4.9M1165.9 181.05h5.9M1160.0 183.02h8.9M1169.8 183.02h5.9M1160.0 184.98h7.9M1168.9 184.98h22.7M1160.0 186.95h6.9M1167.9 186.95h8.9M1160.0 188.92h3.0M1160.0 226.27h3.9M1164.9 226.27h6.9M1172.8 226.27h3.0M1160.0 243.96h3.9M1164.9 243.96h3.9M1160.0 245.93h3.0M1163.9 245.93h9.8M1160.0 247.90h4.9M1165.9 247.90h5.9M1160.0 249.86h8.9M1169.8 249.86h5.9M1160.0 251.83h7.9M1168.9 251.83h22.7M1160.0 253.79h6.9M1167.9 253.79h1.0M1169.8 253.79h4.9M1175.8 253.79h8.9M1160.0 255.76h3.0M1160.0 291.15h3.9M1164.9 291.15h3.9M1160.0 293.11h3.0M1163.9 293.11h9.8M1160.0 295.08h4.9M1165.9 295.08h5.9M1160.0 297.05h8.9M1169.8 297.05h3.9M1160.0 299.01h7.9M1168.9 299.01h22.7M1160.0 300.98h6.9M1167.9 300.98h8.9M1160.0 302.94h3.0M1160.0 336.37h3.9M1164.9 336.37h3.9M1160.0 338.33h3.0M1163.9 338.33h9.8M1160.0 340.30h4.9M1165.9 340.30h5.9M1160.0 342.26h8.9M1169.8 342.26h3.9M1160.0 344.23h7.9M1168.9 344.23h22.7M1160.0 346.20h6.9M1167.9 346.20h8.9M1160.0 348.16h3.0" stroke="#6a9955" stroke-opacity="0.60" stroke-width="1.2" fill="none"/>
<path d="M1160.0 96.51h1.0M1162.0 96.51h6.9M1169.8 96.51h4.9M1175.8 96.51h3.0M1179.7 96.51h3.0M1183.6 96.51h5.9M1160.0 100.45h3.0M1163.9 100.45h6.9M1171.8 100.45h3.0M1175.8 100.45h9.8M1160.0 108.31h3.0M1163.9 108.31h4.9M1169.8 108.31h2.0M1172.8 108.31h6.9M1160.0 116.17h3.0M1163.9 116.17h3.9M1168.9 116.17h3.9M1160.0 126.00h3.0M1163.9 126.00h6.9M1171.8 126.00h7.9M1160.0 151.56h1.0M1162.0 151.56h4.9M1167.9 151.56h3.9M1172.8 151.56h7.9M1181.7 151.56h3.0M1185.6 151.56h2.0M1188.6 151.56h5.9M1195.5 151.56h2.0M1198.4 151.56h6.9M1206.3 151.56h2.0M1209.2 151.56h6.9M1217.1 151.56h4.9M1223.0 151.56h3.0M1227.0 151.56h3.9M1160.0 155.49h3.0M1163.9 155.49h11.8M1160.0 161.39h3.0M1163.9 161.39h4.9M1160.0 190.88h1.0M1162.0 190.88h4.9M1167.9 190.88h3.9M1172.8 190.88h3.9M1177.7 190.88h4.9M1183.6 190.88h3.9M1188.6 190.88h2.0M1191.5 190.88h3.9M1196.4 190.88h6.9M1204.3 190.88h5.9M1211.2 190.88h5.9M1218.1 190.88h3.0M1222.1 190.88h4.9M1228.0 190.88h7.9M1160.0 194.81h3.0M1163.9 194.81h11.8M1160.0 202.68h3.0M1163.9 202.68h4.9M1160.0 257.73h1.0M1162.0 257.73h4.9M1167.9 257.73h3.9M1172.8 257.73h3.9M1177.7 257.73h3.0M1181.7 257.73h3.9M1186.6 257.73h2.0M1189.5 257.73h3.9M1194.5 257.73h4.9M1200.4 257.73h5.9M1207.3 257.73h5.9M1214.2 257.73h3.0M1218.1 257.73h4.9M1224.0 257.73h7.9M1232.9 257.73h3.0M1160.0 261.66h3.0M1163.9 261.66h11.8M1160.0 269.52h3.0M1163.9 269.52h4.9M1160.0 304.91h1.0M1162.0 304.91h4.9M1167.9 304.91h3.9M1172.8 304.91h3.9M1177.7 304.91h4.9M1183.6 304.91h3.9M1188.6 304.91h2.0M1191.5 304.91h3.9M1196.4 304.91h4.9M1202.4 304.91h5.9M1209.2 304.91h5.9M1216.1 304.91h3.0M1220.1 304.91h7.9M1229.0 304.91h5.9M1160.0 308.84h3.0M1163.9 308.84h11.8M1160.0 316.71h3.0M1163.9 316.71h4.9M1160.0 350.13h1.0M1162.0 350.13h4.9M1167.9 350.13h3.9M1172.8 350.13h2.0M1175.8 350.13h7.9M1184.6 350.13h2.0M1187.6 350.13h6.9M1195.5 350.13h9.8M1206.3 350.13h6.9M1214.2 350.13h8.9M1224.0 350.13h4.9M1229.9 350.13h2.0M1232.9 350.13h8.9M1160.0 354.06h1.0M1162.0 354.06h11.8M1160.0 359.96h1.0M1162.0 359.96h4.9" stroke="#569cd6" stroke-opacity="0.62" stroke-width="1.2" fill="none"/>
<path d="M1162.0 110.28h16.7M1162.0 112.24h5.9M1168.9 112.24h10.8M1162.0 118.14h5.9M1168.9 118.14h14.8M1162.0 120.11h6.9M1169.8 120.11h9.8M1162.0 127.97h5.9M1168.9 127.97h9.8M1162.0 131.90h8.9M1171.8 131.90h20.7M1170.8 204.64h5.9M1177.7 204.64h3.9M1202.4 204.64h9.8M1171.8 216.44h5.9M1178.7 216.44h3.9M1160.0 326.54h2.0M1179.7 326.54h2.0M1160.0 328.50h2.0M1179.7 328.50h2.0M1160.0 332.43h2.0M1179.7 332.43h2.0" stroke="#569cd6" stroke-opacity="0.62" stroke-width="1.2" fill="none"/>
<path d="M1162.0 169.26h10.8M1162.0 173.19h10.8M1162.0 175.15h10.8M1162.0 206.61h10.8M1162.0 212.51h10.8M1162.0 218.41h10.8M1162.0 277.39h10.8M1162.0 281.32h10.8M1162.0 287.22h10.8M1162.0 326.54h7.9M1170.8 326.54h5.9M1177.7 326.54h2.0M1162.0 328.50h7.9M1170.8 328.50h5.9M1177.7 328.50h2.0M1162.0 332.43h7.9M1170.8 332.43h5.9M1177.7 332.43h2.0M1162.0 365.86h10.8" stroke="#c586c0" stroke-opacity="0.60" stroke-width="1.2" fill="none"/>
<path d="M1160.0 102.41h1.0M1160.0 104.38h1.0M1160.0 110.28h1.0M1160.0 112.24h1.0M1160.0 118.14h1.0M1160.0 120.11h1.0M1160.0 127.97h1.0M1160.0 131.90h1.0M1160.0 165.32h1.0M1160.0 167.29h1.0M1160.0 171.22h1.0M1160.0 196.78h1.0M1160.0 204.64h1.0M1160.0 210.54h1.0M1160.0 216.44h1.0M1160.0 265.59h1.0M1160.0 273.45h1.0M1160.0 275.42h1.0M1160.0 279.35h1.0M1160.0 285.25h1.0M1160.0 320.64h1.0M1160.0 322.60h1.0M1160.0 363.89h1.0" stroke="#6796e6" stroke-opacity="0.60" stroke-width="1.2" fill="none"/>
<rect x="1157" y="177.94" width="2" height="2.2" fill="#e5534b"/>
<rect x="1157" y="184.23" width="2" height="1.97" fill="#0a74c9"/>
<rect x="1157" y="205.86" width="2" height="1.97" fill="#0a74c9"/>
<rect x="1157" y="211.76" width="2" height="1.97" fill="#0a74c9"/>
<rect x="1157" y="217.66" width="2" height="5.90" fill="#0a74c9"/>
</svg>
<div class="abs" style="left:1269px;top:88px;width:11px;height:632px;background:#212121;border-left:1px solid #2a2a2a"></div>
<div class="abs" style="left:1269.6px;top:284.2px;width:4.6px;height:5.8px;background:#b8433e"></div>
<div class="abs" style="left:1269.6px;top:297.6px;width:4.6px;height:5.9px;background:#1b64a3"></div>
<div class="abs" style="left:1269.6px;top:344.6px;width:4.6px;height:6.1px;background:#1b64a3"></div>
<div class="abs" style="left:1269.6px;top:357.6px;width:4.6px;height:6.1px;background:#1b64a3"></div>
<div class="abs" style="left:1269.6px;top:371.8px;width:4.6px;height:12.9px;background:#1b64a3"></div>
<div class="abs" style="left:1269.6px;top:422.3px;width:10.4px;height:2.5px;background:#808080"></div>
<div class="abs" style="left:382.4px;top:548.9px;width:239.4px;height:162.4px;border:3.4px solid #fd3646;border-radius:2px"></div>
<svg class="abs" style="left:630px;top:605px" width="70" height="44" viewBox="630 605 70 44"><path d="M684.9 626.4 H642.6 M651.7 616.2 L642.4 626.4 L651.7 636.6" fill="none" stroke="#fd3646" stroke-width="4.6" stroke-linecap="round" stroke-linejoin="round"/></svg>
<div class="t" style="left:702.4px;top:615.5px;height:22px;line-height:22px;font-family:'Liberation Mono',monospace;font-weight:bold;font-size:16.1px;color:#fd3646;-webkit-text-stroke:0.45px;transform:scaleY(1.0);transform-origin:0 50%">Dynamic Parameters</div>

</div>
</body>
</html>
